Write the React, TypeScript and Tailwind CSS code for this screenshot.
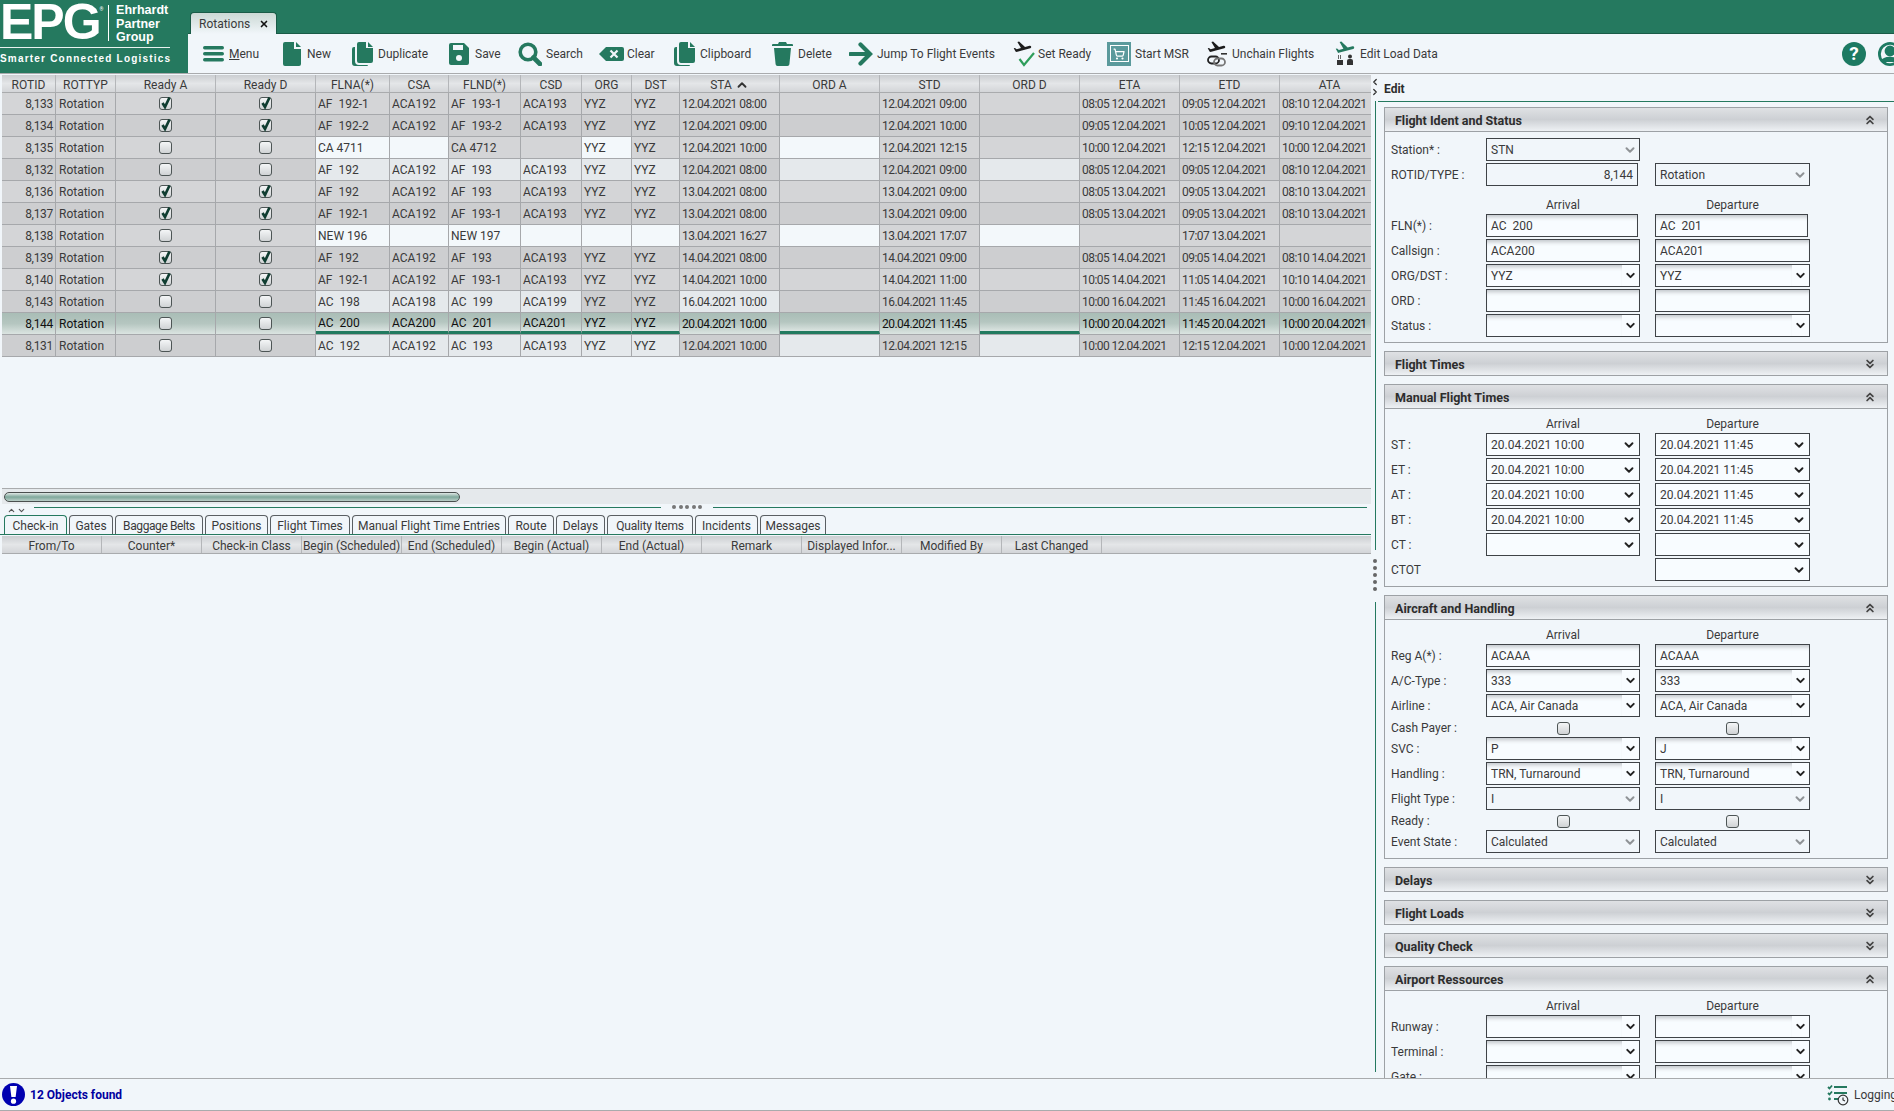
import { ChevronDown, ChevronUp, ChevronsDown, ChevronsUp, ShoppingCart, X } from "lucide-react";
import type { ReactNode } from "react";

const green = "#25795f";

const planePath =
  "M22.07 9.64c-.21-.8-1.04-1.28-1.84-1.06L14.92 10l-6.9-6.43-1.93.51 4.14 7.17-4.97 1.33-1.97-1.54-1.45.39 1.82 3.16.77 1.33 1.6-.43 5.31-1.42 4.35-1.16L21 11.49c.81-.23 1.28-1.05 1.07-1.85z";

const Doc = () => (
  <svg width="18" height="24" viewBox="0 0 18 24" fill={green}>
    <path d="M0 2a2 2 0 0 1 2-2h9v7h7v15a2 2 0 0 1-2 2H2a2 2 0 0 1-2-2z" />
    <path d="M13 0l5 5h-5z" />
  </svg>
);

const Copy = () => (
  <svg width="21" height="24" viewBox="0 0 21 24" fill={green}>
    <path d="M5 2a2 2 0 0 1 2-2h7v6h7v13a2 2 0 0 1-2 2H7a2 2 0 0 1-2-2z" />
    <path d="M16 0l5 5h-5z" />
    <path d="M0 7a2 2 0 0 1 2-2h1v14a4 4 0 0 0 4 4h9v0a1 1 0 0 1-1 1H3a3 3 0 0 1-3-3z" />
  </svg>
);

const toolbarIcons: Record<string, ReactNode> = {
  Menu: (
    <svg width="21" height="16" viewBox="0 0 21 16" fill={green}>
      <rect y="0" width="21" height="3.4" rx="1.7" />
      <rect y="6" width="21" height="3.4" rx="1.7" />
      <rect y="12" width="21" height="3.4" rx="1.7" />
    </svg>
  ),
  New: <Doc />,
  Duplicate: <Copy />,
  Save: (
    <svg width="20" height="22" viewBox="0 0 20 22">
      <path fill={green} d="M2 0h13l5 5v15a2 2 0 0 1-2 2H2a2 2 0 0 1-2-2V2a2 2 0 0 1 2-2z" />
      <rect x="4" y="2" width="10" height="5" fill="#f1f6fa" />
      <circle cx="10" cy="15" r="3" fill="#f1f6fa" />
    </svg>
  ),
  Search: (
    <svg width="24" height="24" viewBox="0 0 24 24" fill="none" stroke={green}>
      <circle cx="10" cy="10" r="7.8" strokeWidth="3.6" />
      <path d="M15.5 15.5L22 22" strokeWidth="4.6" strokeLinecap="round" />
    </svg>
  ),
  Clear: (
    <svg width="25" height="14" viewBox="0 0 25 14">
      <path fill={green} d="M7 0h16a2 2 0 0 1 2 2v10a2 2 0 0 1-2 2H7L0 7z" />
      <path d="M11.5 3.5l7 7M18.5 3.5l-7 7" stroke="#f1f6fa" strokeWidth="2.2" />
    </svg>
  ),
  Clipboard: <Copy />,
  Delete: (
    <svg width="21" height="24" viewBox="0 0 21 24" fill={green}>
      <path d="M7 0h7l1 2h5a1 1 0 0 1 1 1v1H0V3a1 1 0 0 1 1-1h5z" />
      <path d="M2 6h17l-1.6 16.2A2 2 0 0 1 15.4 24H5.6a2 2 0 0 1-2-1.8z" />
    </svg>
  ),
  "Jump To Flight Events": (
    <svg width="24" height="24" viewBox="0 0 24 24" fill="none" stroke={green} strokeWidth="4.2">
      <path d="M1.5 12H20" strokeLinecap="round" />
      <path d="M11.5 2.5L21 12l-9.5 9.5" strokeLinecap="round" />
    </svg>
  ),
  "Set Ready": (
    <svg width="22" height="26" viewBox="0 0 22 26">
      <svg x="0" y="0" width="19" height="12" viewBox="1 3 22 14" preserveAspectRatio="none">
        <path d={planePath} fill="#1c1c1c" />
      </svg>
      <path d="M6.5 18l4.5 6L21 12" fill="none" stroke="#2f9e5b" strokeWidth="2.2" />
    </svg>
  ),
  "Start MSR": (
    <div className="flex h-[24px] w-[24px] items-center justify-center bg-[#5b9a9c]">
      <div className="flex h-[17px] w-[19px] items-center justify-center border border-white">
        <ShoppingCart size={12} color="#ffffff" strokeWidth={2.4} />
      </div>
    </div>
  ),
  "Unchain Flights": (
    <svg width="20" height="26" viewBox="0 0 20 26">
      <svg x="0" y="0" width="19" height="12" viewBox="1 3 22 14" preserveAspectRatio="none">
        <path d={planePath} fill="#1c1c1c" />
      </svg>
      <rect x="14" y="12" width="6" height="1.6" fill="#333" />
      <rect x="1" y="15.5" width="11" height="7" rx="3.5" fill="none" stroke="#222" strokeWidth="1.8" />
      <rect x="7" y="17.5" width="11" height="7" rx="3.5" fill="none" stroke="#777" strokeWidth="1.8" />
    </svg>
  ),
  "Edit Load Data": (
    <svg width="20" height="25" viewBox="0 0 20 25">
      <svg x="0" y="0" width="20" height="13" viewBox="1 3 22 14" preserveAspectRatio="none">
        <path d={planePath} fill={green} />
      </svg>
      <rect x="3" y="14" width="1" height="4" fill="#666" />
      <rect x="5" y="14" width="1" height="4" fill="#666" />
      <rect x="2" y="19" width="6" height="5" fill="#333" />
      <circle cx="15" cy="15.5" r="2" fill="#333" />
      <path d="M12 24v-4a2 2 0 0 1 2-2h2a2 2 0 0 1 2 2v4z" fill="#333" />
    </svg>
  ),
};

const toolbar = [
  { label: "Menu", cls: "w-[80px]", icon: "w-[26px]" },
  { label: "New", cls: "w-[69px]", icon: "w-[24px]" },
  { label: "Duplicate", cls: "w-[97px]", icon: "w-[26px]" },
  { label: "Save", cls: "w-[69px]", icon: "w-[26px]" },
  { label: "Search", cls: "w-[81px]", icon: "w-[28px]" },
  { label: "Clear", cls: "w-[75px]", icon: "w-[28px]" },
  { label: "Clipboard", cls: "w-[98px]", icon: "w-[26px]" },
  { label: "Delete", cls: "w-[77px]", icon: "w-[26px]" },
  { label: "Jump To Flight Events", cls: "w-[164px]", icon: "w-[28px]" },
  { label: "Set Ready", cls: "w-[94px]", icon: "w-[25px]" },
  { label: "Start MSR", cls: "w-[100px]", icon: "w-[28px]" },
  { label: "Unchain Flights", cls: "w-[128px]", icon: "w-[25px]" },
  { label: "Edit Load Data", cls: "w-[110px]", icon: "w-[25px]" },
];

const columns = [
  { label: "ROTID", cls: "w-[54px]" },
  { label: "ROTTYP", cls: "w-[60px]" },
  { label: "Ready A", cls: "w-[100px]" },
  { label: "Ready D", cls: "w-[100px]" },
  { label: "FLNA(*)", cls: "w-[74px]" },
  { label: "CSA", cls: "w-[59px]" },
  { label: "FLND(*)", cls: "w-[72px]" },
  { label: "CSD", cls: "w-[61px]" },
  { label: "ORG", cls: "w-[50px]" },
  { label: "DST", cls: "w-[48px]" },
  { label: "STA", cls: "w-[100px]" },
  { label: "ORD A", cls: "w-[100px]" },
  { label: "STD", cls: "w-[100px]" },
  { label: "ORD D", cls: "w-[100px]" },
  { label: "ETA", cls: "w-[100px]" },
  { label: "ETD", cls: "w-[100px]" },
  { label: "ATA", cls: "w-[100px]" },
];

// shade per cell from FLNA on: g grey, l light, w white
const rows = [
  { id: "8,133", a: true, d: true, shade: "ggggggggggggg", cells: ["AF  192-1", "ACA192", "AF  193-1", "ACA193", "YYZ", "YYZ", "12.04.2021 08:00", "", "12.04.2021 09:00", "", "08:05 12.04.2021", "09:05 12.04.2021", "08:10 12.04.2021"] },
  { id: "8,134", a: true, d: true, shade: "ggggggggggggg", cells: ["AF  192-2", "ACA192", "AF  193-2", "ACA193", "YYZ", "YYZ", "12.04.2021 09:00", "", "12.04.2021 10:00", "", "09:05 12.04.2021", "10:05 12.04.2021", "09:10 12.04.2021"] },
  { id: "8,135", a: false, d: false, shade: "wwggwggwggggg", cells: ["CA 4711", "", "CA 4712", "", "YYZ", "YYZ", "12.04.2021 10:00", "", "12.04.2021 12:15", "", "10:00 12.04.2021", "12:15 12.04.2021", "10:00 12.04.2021"] },
  { id: "8,132", a: false, d: false, shade: "llllllglglggg", cells: ["AF  192", "ACA192", "AF  193", "ACA193", "YYZ", "YYZ", "12.04.2021 08:00", "", "12.04.2021 09:00", "", "08:05 12.04.2021", "09:05 12.04.2021", "08:10 12.04.2021"] },
  { id: "8,136", a: true, d: true, shade: "ggggggggggggg", cells: ["AF  192", "ACA192", "AF  193", "ACA193", "YYZ", "YYZ", "13.04.2021 08:00", "", "13.04.2021 09:00", "", "08:05 13.04.2021", "09:05 13.04.2021", "08:10 13.04.2021"] },
  { id: "8,137", a: true, d: true, shade: "ggggggggggggg", cells: ["AF  192-1", "ACA192", "AF  193-1", "ACA193", "YYZ", "YYZ", "13.04.2021 08:00", "", "13.04.2021 09:00", "", "08:05 13.04.2021", "09:05 13.04.2021", "08:10 13.04.2021"] },
  { id: "8,138", a: false, d: false, shade: "wwwwwwgwgwggg", cells: ["NEW 196", "", "NEW 197", "", "", "", "13.04.2021 16:27", "", "13.04.2021 17:07", "", "", "17:07 13.04.2021", ""] },
  { id: "8,139", a: true, d: true, shade: "ggggggggggggg", cells: ["AF  192", "ACA192", "AF  193", "ACA193", "YYZ", "YYZ", "14.04.2021 08:00", "", "14.04.2021 09:00", "", "08:05 14.04.2021", "09:05 14.04.2021", "08:10 14.04.2021"] },
  { id: "8,140", a: true, d: true, shade: "ggggggggggggg", cells: ["AF  192-1", "ACA192", "AF  193-1", "ACA193", "YYZ", "YYZ", "14.04.2021 10:00", "", "14.04.2021 11:00", "", "10:05 14.04.2021", "11:05 14.04.2021", "10:10 14.04.2021"] },
  { id: "8,143", a: false, d: false, shade: "llllgglgggggg", cells: ["AC  198", "ACA198", "AC  199", "ACA199", "YYZ", "YYZ", "16.04.2021 10:00", "", "16.04.2021 11:45", "", "10:00 16.04.2021", "11:45 16.04.2021", "10:00 16.04.2021"] },
  { id: "8,144", a: false, d: false, selected: true, shade: "bbbbbbsbsbsss", cells: ["AC  200", "ACA200", "AC  201", "ACA201", "YYZ", "YYZ", "20.04.2021 10:00", "", "20.04.2021 11:45", "", "10:00 20.04.2021", "11:45 20.04.2021", "10:00 20.04.2021"] },
  { id: "8,131", a: false, d: false, shade: "llllllglglggg", cells: ["AC  192", "ACA192", "AC  193", "ACA193", "YYZ", "YYZ", "12.04.2021 10:00", "", "12.04.2021 12:15", "", "10:00 12.04.2021", "12:15 12.04.2021", "10:00 12.04.2021"] },
];

const tabs = [
  { label: "Check-in", cls: "w-[63px]" },
  { label: "Gates", cls: "w-[44px]" },
  { label: "Baggage Belts", cls: "w-[88px] tracking-[-0.4px]" },
  { label: "Positions", cls: "w-[63px]" },
  { label: "Flight Times", cls: "w-[80px]" },
  { label: "Manual Flight Time Entries", cls: "w-[154px]" },
  { label: "Route", cls: "w-[46px]" },
  { label: "Delays", cls: "w-[49px]" },
  { label: "Quality Items", cls: "w-[86px] tracking-[-0.2px]" },
  { label: "Incidents", cls: "w-[63px]" },
  { label: "Messages", cls: "w-[66px]" },
];
const subColumns = ["From/To", "Counter*", "Check-in Class", "Begin (Scheduled)", "End (Scheduled)", "Begin (Actual)", "End (Actual)", "Remark", "Displayed Infor...", "Modified By", "Last Changed"];

const Check = ({ checked }: { checked: boolean }) => (
  <div className="relative h-[13px] w-[13px] rounded-[3px] border border-[#4d5555] bg-linear-to-b from-[#f4f6f7] to-[#d0d3d5]">
    {checked && (
      <svg className="absolute -top-[2px] left-0" width="12" height="14" viewBox="0 0 12 14" fill="none">
        <path d="M2.5 7l2.5 4L9.5 1.5" stroke="#0f3d31" strokeWidth="2.7" />
      </svg>
    )}
  </div>
);

const Field = ({ value = "", kind, cls = "w-[154px]" }: { value?: string; kind: string; cls?: string }) => {
  const shaded = kind === "select" || kind === "input";
  const body = (
    <span className={`flex h-full flex-1 items-center overflow-hidden whitespace-pre pl-[4px] ${kind === "num" ? "justify-end pr-[4px]" : ""} ${shaded ? "shadow-[inset_0_5px_4px_-3px_#bfc3c8]" : ""}`}>
      {value}
    </span>
  );
  return (
    <div className={`flex h-[23px] shrink-0 items-center border border-[#3f4347] ${cls} ${kind === "ro" || kind === "num" ? "bg-[#f1f6fa]" : "bg-[#f8fcff]"}`}>
      {body}
      {kind === "select" && (
        <span className="flex h-full w-[17px] items-center justify-center pr-[1px]">
          <ChevronDown size={13} strokeWidth={3.6} color="#222" />
        </span>
      )}
      {kind === "date" && (
        <span className="flex h-full w-[21px] items-center justify-center">
          <ChevronDown size={14} strokeWidth={3.2} color="#222" />
        </span>
      )}
      {kind === "ro" && (
        <span className="flex h-full w-[17px] items-center justify-center pr-[1px]">
          <ChevronDown size={14} strokeWidth={3.4} color="#8f9396" />
        </span>
      )}
    </div>
  );
};

const Row = ({ label, children, cls = "h-[25px]" }: { label: string; children: ReactNode; cls?: string }) => (
  <div className={`flex items-start ${cls}`}>
    <div className="flex h-[23px] w-[95px] shrink-0 items-center">{label}</div>
    {children}
  </div>
);

const Pair = ({ label, kind, a = "", b = "" }: { label: string; kind: string; a?: string; b?: string }) => (
  <Row label={label}>
    <Field kind={kind} value={a} />
    <div className="w-[15px] shrink-0" />
    <Field kind={kind} value={b} cls="w-[155px]" />
  </Row>
);

const CheckPair = ({ label }: { label: string }) => (
  <div className="flex h-[18px] items-center">
    <div className="w-[95px] shrink-0">{label}</div>
    <div className="flex w-[154px] justify-center"><Check checked={false} /></div>
    <div className="w-[15px] shrink-0" />
    <div className="flex w-[155px] justify-center"><Check checked={false} /></div>
  </div>
);

const ArrDep = ({ cls }: { cls: string }) => (
  <div className={`flex items-end pl-[95px] leading-[16px] ${cls}`}>
    <div className="w-[154px] text-center">Arrival</div>
    <div className="w-[15px] shrink-0" />
    <div className="w-[155px] text-center">Departure</div>
  </div>
);

const Section = ({ title, open, children }: { title: string; open: boolean; children?: ReactNode }) => (
  <div className="shrink-0 border border-[#9da1a5]">
    <div className={`flex items-center justify-between bg-linear-to-b from-[#dfe1e4] via-[#cdd0d4] to-[#eef1f4] pl-[10px] pr-[10px] text-[12.5px] font-bold text-[#2d2d2d] ${children ? "h-[24px] border-b border-[#9da1a5]" : "h-[23px]"}`}>
      <span className="pt-[4px]">{title}</span>
      {open ? <ChevronsUp size={14} strokeWidth={3} color="#444" /> : <ChevronsDown size={14} strokeWidth={3} color="#444" />}
    </div>
    {children && <div className="pl-[6px] pb-[3px]">{children}</div>}
  </div>
);

export default function App() {
  return (
    <div className="flex h-[1111px] w-[1894px] flex-col overflow-hidden bg-[#f1f6fa] font-['Roboto',sans-serif] text-[12px] text-[#3a3a3a]">
      {/* top: logo + tab strip + toolbar */}
      <div className="flex h-[74px] shrink-0 border-b border-[#a9abad]">
        <div className="w-[188px] shrink-0 overflow-hidden bg-[#25795f] text-white">
          <div className="flex h-[48px] w-[170px] items-start border-b-[1.5px] border-white/90">
            <span className="font-['Liberation_Sans',sans-serif] text-[50px] font-bold leading-[45px] tracking-[-2px]">EPG</span>
            <span className="mt-[6px] w-[8px] text-[5px]">®</span>
            <div className="mt-[5px] h-[36px] w-[1.5px] bg-white" />
            <div className="ml-[7px] mt-[4px] font-['Liberation_Sans',sans-serif] text-[12.5px] font-bold leading-[13.5px]">
              Ehrhardt<br />Partner<br />Group
            </div>
          </div>
          <div className="mt-[5px] whitespace-nowrap font-['Liberation_Sans',sans-serif] text-[10px] font-bold leading-[12px] tracking-[1.2px]">Smarter Connected Logistics</div>
        </div>
        <div className="flex min-w-0 flex-1 flex-col">
          <div className="flex h-[34px] shrink-0 items-end border-b border-[#1a5b47] bg-[#25795f] pl-[2px]">
            <div className="-mb-[1px] flex h-[22px] w-[87px] items-center gap-[9px] rounded-t-[4px] border border-b-0 border-[#1a5b47] bg-linear-to-b from-[#ccd9d5] to-[#f1f6fa] pl-[8px]">
              <span>Rotations</span>
              <X size={10} strokeWidth={4} color="#111" />
            </div>
          </div>
          <div className="flex flex-1 items-center justify-between pl-[15px]">
            <div className="flex items-center">
              {toolbar.map((t) => (
                <div key={t.label} className={`flex shrink-0 items-center ${t.cls}`}>
                  <div className={`flex h-[26px] shrink-0 items-center ${t.icon}`}>{toolbarIcons[t.label]}</div>
                  {t.label === "Menu" ? (
                    <span><u>M</u>enu</span>
                  ) : (
                    <span className="whitespace-nowrap">{t.label}</span>
                  )}
                </div>
              ))}
            </div>
            <div className="flex w-[52px] shrink-0 items-center gap-[12px] overflow-hidden">
              <div className="flex h-[24px] w-[24px] shrink-0 items-center justify-center rounded-full bg-[#1d7a62] text-[19px] font-bold leading-none text-white">?</div>
              <svg className="shrink-0" width="24" height="24" viewBox="0 0 24 24" fill="none" stroke="#1d7a62" strokeWidth="2.8">
                <circle cx="12" cy="12" r="10.6" />
                <circle cx="12" cy="9" r="4" fill="#1d7a62" />
                <path d="M4 20c2-5 14-5 16 0" fill="#1d7a62" />
              </svg>
            </div>
          </div>
        </div>
      </div>

      <div className="flex min-h-0 flex-1">
        {/* left: rotations grid and detail tabs */}
        <div className="flex w-[1372px] shrink-0 flex-col">
          <div className="ml-[2px] h-[414px] w-[1369px] shrink-0 overflow-hidden pt-[1px]">
            <div className="flex h-[18px] w-[1378px] border-b border-[#a9abad] bg-linear-to-b from-[#cbced1] via-[#e4e6e8] to-[#d3d5d8]">
              {columns.map((c) => (
                <div key={c.label} className={`flex h-full shrink-0 items-center justify-center gap-[3px] border-r border-[#b4b6b9] pt-[2px] ${c.cls}`}>
                  {c.label}
                  {c.label === "STA" && <ChevronUp size={14} strokeWidth={3.2} color="#333" />}
                </div>
              ))}
            </div>
            {rows.map((r, i) => {
              const g = i % 2 === 0 ? "bg-[#d4d5d7]" : "bg-[#cdced0]";
              const sel = "bg-linear-to-b from-[#a9bdb6] via-[#b5c6c0] to-[#dbe4e1]";
              const first = r.selected ? sel : g;
              return (
                <div key={r.id} className={`flex h-[22px] w-[1378px] border-b border-[#a6a8ab] ${r.selected ? "text-[#111]" : ""}`}>
                  <div className={`flex h-full w-[54px] shrink-0 items-center justify-end border-r border-[#a6a8ab] pr-[2px] tracking-[-0.3px] ${first}`}>{r.id}</div>
                  <div className={`flex h-full w-[60px] shrink-0 items-center border-r border-[#a6a8ab] pl-[3px] ${first}`}>Rotation</div>
                  <div className={`flex h-full w-[100px] shrink-0 items-center justify-center border-r border-[#a6a8ab] ${first}`}><Check checked={r.a} /></div>
                  <div className={`flex h-full w-[100px] shrink-0 items-center justify-center border-r border-[#a6a8ab] ${first}`}><Check checked={r.d} /></div>
                  {r.cells.map((v, j) => {
                    const s = r.shade[j];
                    const bg =
                      s === "w" ? "bg-[#f3f8fb]"
                      : s === "l" ? "bg-[#e5e9ec]"
                      : s === "b" ? `${sel} border-b-[3px] border-b-[#217a5f] pt-[2px]`
                      : s === "s" ? sel
                      : g;
                    return (
                      <div key={j} className={`flex h-full shrink-0 items-center overflow-hidden whitespace-pre border-r border-r-[#a6a8ab] pl-[2px] ${columns[j + 4].cls} ${j >= 6 ? "tracking-[-0.55px]" : ""} ${bg}`}>
                        {v}
                      </div>
                    );
                  })}
                </div>
              );
            })}
          </div>

          <div className="ml-[2px] flex h-[16px] w-[1369px] shrink-0 items-center border-t border-[#a9abad] bg-[#e5e9ec] pl-[2px]">
            <div className="h-[10px] w-[456px] rounded-full border border-[#4a4f4f] bg-linear-to-b from-[#dfe8e6] via-[#7fa89c] to-[#b9cdc7]" />
          </div>

          <div className="flex h-[11px] shrink-0 items-start pt-[2px]">
            <div className="flex w-[34px] items-center gap-[1px] pl-[7px]">
              <ChevronUp size={9} strokeWidth={3} color="#555" />
              <ChevronDown size={9} strokeWidth={3} color="#555" />
            </div>
            <div className="mt-[1px] h-[1px] w-[627px] bg-[#25795f]" />
            <div className="mt-[-1px] flex w-[52px] justify-center gap-[2.5px]">
              {[0, 1, 2, 3, 4].map((d) => (
                <span key={d} className="h-[4px] w-[4px] rounded-full bg-[#777]" />
              ))}
            </div>
            <div className="mt-[1px] h-[1px] w-[654px] bg-[#25795f]" />
          </div>

          <div className="flex h-[20px] w-[1371px] shrink-0 items-end gap-[2px] border-b border-[#25795f] pl-[4px]">
            {tabs.map((t, i) => (
              <div key={t.label} className={`flex h-[19px] items-center justify-center whitespace-nowrap rounded-t-[4px] border border-b-0 pt-[1px] ${t.cls} ${i === 0 ? "border-[#25795f]" : "border-[#5a5f63]"}`}>
                {t.label}
              </div>
            ))}
          </div>

          <div className="ml-[2px] mt-[1px] flex h-[18px] w-[1369px] shrink-0 border-b border-[#a9abad] bg-linear-to-b from-[#cbced1] via-[#e4e6e8] to-[#d3d5d8]">
            {subColumns.map((c) => (
              <div key={c} className="flex h-full w-[100px] shrink-0 items-center justify-center overflow-hidden whitespace-nowrap border-r border-[#b4b6b9] pt-[2px]">
                {c}
              </div>
            ))}
          </div>
        </div>

        {/* splitter */}
        <div className="flex w-[6px] shrink-0 flex-col items-center">
          <div className="mt-[3px] flex h-[24px] shrink-0 flex-col justify-start">
            <ChevronUp className="-rotate-90" size={10} strokeWidth={3} color="#333" />
            <ChevronDown className="-rotate-90" size={10} strokeWidth={3} color="#333" />
          </div>
          <div className="h-[449px] w-[1px] shrink-0 bg-[#25795f]" />
          <div className="mt-[9px] flex shrink-0 flex-col gap-[3px]">
            {[0, 1, 2, 3, 4].map((d) => (
              <span key={d} className="block h-[4px] w-[4px] rounded-full bg-[#666]" />
            ))}
          </div>
          <div className="mt-[11px] h-[470px] w-[1px] shrink-0 bg-[#25795f]" />
        </div>

        {/* edit panel */}
        <div className="flex min-w-0 flex-1 flex-col overflow-hidden">
          <div className="flex h-[28px] shrink-0 items-center border-b border-[#25795f] pl-[6px] pt-[2px] font-bold text-[#2d2d2d]">Edit</div>
          <div className="mr-[6px] ml-[6px] mt-[5px] flex flex-col gap-[8px] overflow-hidden">
            <Section title="Flight Ident and Status" open>
              <div className="pt-[6px]">
                <Row label="Station* :"><Field kind="ro" value="STN" /></Row>
                <Row label="ROTID/TYPE :">
                  <Field kind="num" value="8,144" cls="w-[152px]" />
                  <div className="w-[17px] shrink-0" />
                  <Field kind="ro" value="Rotation" cls="w-[155px]" />
                </Row>
                <ArrDep cls="h-[26px] pb-[1px]" />
                <Row label="FLN(*) :">
                  <Field kind="input" value="AC  200" cls="w-[152px]" />
                  <div className="w-[17px] shrink-0" />
                  <Field kind="input" value="AC  201" cls="w-[153px]" />
                </Row>
                <Pair label="Callsign :" kind="input" a="ACA200" b="ACA201" />
                <Pair label="ORG/DST :" kind="select" a="YYZ" b="YYZ" />
                <Pair label="ORD :" kind="input" />
                <Pair label="Status :" kind="select" />
              </div>
            </Section>
            <Section title="Flight Times" open={false} />
            <Section title="Manual Flight Times" open>
              <ArrDep cls="h-[24px] pb-[1px]" />
              <Pair label="ST :" kind="date" a="20.04.2021 10:00" b="20.04.2021 11:45" />
              <Pair label="ET :" kind="date" a="20.04.2021 10:00" b="20.04.2021 11:45" />
              <Pair label="AT :" kind="date" a="20.04.2021 10:00" b="20.04.2021 11:45" />
              <Pair label="BT :" kind="date" a="20.04.2021 10:00" b="20.04.2021 11:45" />
              <Pair label="CT :" kind="date" />
              <Row label="CTOT">
                <div className="w-[169px] shrink-0" />
                <Field kind="date" cls="w-[155px]" />
              </Row>
            </Section>
            <Section title="Aircraft and Handling" open>
              <ArrDep cls="h-[24px] pb-[1px]" />
              <Pair label="Reg A(*) :" kind="input" a="ACAAA" b="ACAAA" />
              <Pair label="A/C-Type :" kind="select" a="333" b="333" />
              <Pair label="Airline :" kind="select" a="ACA, Air Canada" b="ACA, Air Canada" />
              <CheckPair label="Cash Payer :" />
              <Pair label="SVC :" kind="select" a="P" b="J" />
              <Pair label="Handling :" kind="select" a="TRN, Turnaround" b="TRN, Turnaround" />
              <Pair label="Flight Type :" kind="ro" a="I" b="I" />
              <CheckPair label="Ready :" />
              <Pair label="Event State :" kind="ro" a="Calculated" b="Calculated" />
            </Section>
            <Section title="Delays" open={false} />
            <Section title="Flight Loads" open={false} />
            <Section title="Quality Check" open={false} />
            <Section title="Airport Ressources" open>
              <ArrDep cls="h-[24px] pb-[1px]" />
              <Pair label="Runway :" kind="select" />
              <Pair label="Terminal :" kind="select" />
              <Pair label="Gate :" kind="select" />
            </Section>
          </div>
        </div>
      </div>

      {/* status bar */}
      <div className="flex h-[33px] shrink-0 items-center justify-between overflow-hidden border-y border-[#a9abad]">
        <div className="flex items-center gap-[5px] pl-[2px]">
          <div className="flex h-[23px] w-[23px] items-center justify-center rounded-full bg-[#0000b0]">
            <svg width="7" height="18" viewBox="0 0 7 18" fill="#ffffff">
              <path d="M0 0h7l-1.4 11H1.4z" />
              <circle cx="3.5" cy="15.2" r="2.6" />
            </svg>
          </div>
          <span className="font-bold text-[#0000a0]">12 Objects found</span>
        </div>
        <div className="flex w-[67px] shrink-0 items-center gap-[5px] overflow-hidden">
          <svg className="shrink-0" width="22" height="22" viewBox="0 0 22 22" fill="none" stroke={green} strokeWidth="1.8">
            <path d="M1 3l1.5 1.5L5 1.5M1 9l1.5 1.5L5 7.5" />
            <circle cx="2.5" cy="15" r="1.4" fill={green} stroke="none" />
            <path d="M7 3h13M7 9h13M7 15h4" />
            <circle cx="16" cy="16" r="4.8" stroke="#333" strokeWidth="1.2" />
            <path d="M16 13.5V16l2 1" stroke="#333" strokeWidth="1.2" />
          </svg>
          <span className="whitespace-nowrap">Logging</span>
        </div>
      </div>
    </div>
  );
}
